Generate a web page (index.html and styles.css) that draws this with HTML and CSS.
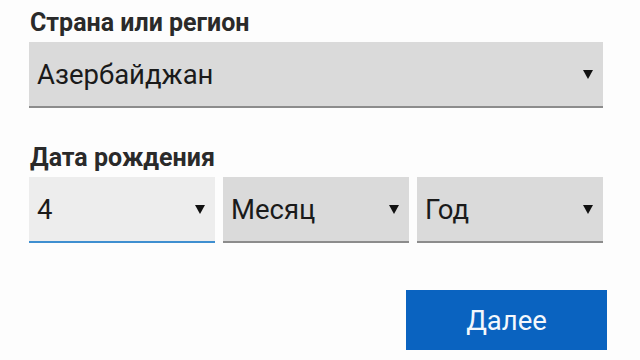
FILE: index.html
```html
<!DOCTYPE html>
<html lang="ru">
<head>
<meta charset="utf-8">
<link rel="stylesheet" href="styles.css">
</head>
<body>
<main class="form">
  <div class="label label-country">Страна или регион</div>
  <div class="select select-wide">
    <span class="value">Азербайджан</span>
    <svg class="arrow" viewBox="0 0 10 9"><polygon points="0,0 10,0 5,9"/></svg>
  </div>
  <div class="label label-date">Дата рождения</div>
  <div class="row">
    <div class="select select-active">
      <span class="value">4</span>
      <svg class="arrow" viewBox="0 0 10 9"><polygon points="0,0 10,0 5,9"/></svg>
    </div>
    <div class="select">
      <span class="value">Месяц</span>
      <svg class="arrow" viewBox="0 0 10 9"><polygon points="0,0 10,0 5,9"/></svg>
    </div>
    <div class="select">
      <span class="value">Год</span>
      <svg class="arrow" viewBox="0 0 10 9"><polygon points="0,0 10,0 5,9"/></svg>
    </div>
  </div>
  <div class="actions">
    <button class="next">Далее</button>
  </div>
</main>
</body>
</html>
```
FILE: styles.css
```css
html, body {
  margin: 0;
  padding: 0;
  background: #fdfdfd;
}
body {
  width: 640px;
  height: 360px;
  overflow: hidden;
  font-family: Roboto, "Noto Sans", sans-serif;
  color: #1e1e1e;
}
.form {
  display: flex;
  flex-direction: column;
  padding: 8px 37px 0 29px;
}
.label {
  font-weight: bold;
  font-size: 25px;
  line-height: 30px;
  color: #2a2a2a;
  padding-left: 1px;
}
.label-country {
  margin-bottom: 4px;
}
.label-date {
  margin-top: 35px;
  margin-bottom: 4px;
}
.select {
  box-sizing: border-box;
  height: 66px;
  background: #dadada;
  border-bottom: 2px solid #8c8c8c;
  display: flex;
  align-items: center;
  justify-content: space-between;
  padding: 0 10px 0 8px;
}
.select .value {
  font-size: 27.5px;
  color: #1a1a1a;
}
.arrow {
  width: 10px;
  height: 9px;
  fill: #111;
}
.row {
  display: grid;
  grid-template-columns: 186px 186px 186px;
  column-gap: 8px;
}
.select-active {
  background: #ededed;
  border-bottom-color: #3f8fd0;
}
.actions {
  display: flex;
  justify-content: flex-end;
  margin-top: 47px;
  margin-right: -4px;
}
.next {
  width: 201px;
  height: 60px;
  border: none;
  background: #0a63c0;
  color: #f4f8fc;
  font-family: Roboto, "Noto Sans", sans-serif;
  font-size: 27.5px;
  padding: 0;
}
```
